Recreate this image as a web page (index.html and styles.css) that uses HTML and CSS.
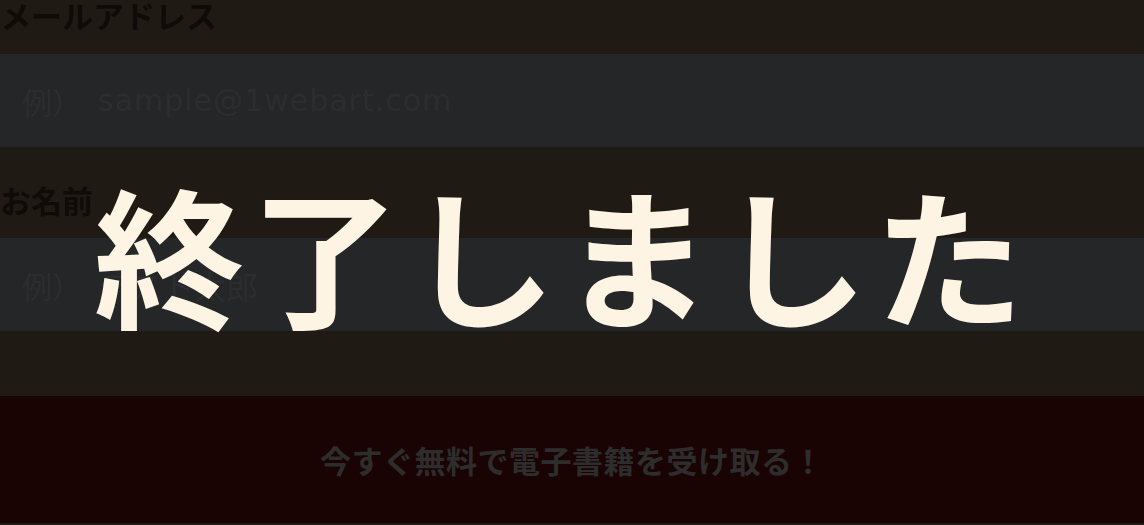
FILE: index.html
```html
<!DOCTYPE html>
<html lang="ja">
<head>
<meta charset="utf-8">
<link rel="stylesheet" href="styles.css">
</head>
<body>
<div class="page">
  <form class="form">
    <label class="label label-first">メールアドレス</label>
    <div class="input"><span class="ex">例）</span><span class="ph">sample@1webart.com</span></div>
    <label class="label label-second">お名前</label>
    <div class="input"><span class="ex">例）</span><span class="ph ph-jp">テスト太郎</span></div>
    <div class="button">今すぐ無料で電子書籍を受け取る！</div>
  </form>
  <div class="overlay">終了しました</div>
</div>
</body>
</html>
```
FILE: styles.css
```css
html, body {
  margin: 0;
  padding: 0;
  background: #201a15;
  overflow: hidden;
}
.page {
  position: relative;
  width: 1144px;
  height: 525px;
  font-family: "Noto Sans CJK JP", "Noto Sans", sans-serif;
}
.form {
  display: flex;
  flex-direction: column;
}
.label {
  font-weight: 700;
  font-size: 31px;
  color: #0e0b09;
  line-height: 30px;
  padding-left: 0;
}
.label-first {
  height: 54px;
}
.label-second {
  margin-top: 38px;
  padding-top: 0;
  height: 53px;
}
.input {
  height: 93px;
  background: #252627;
  display: flex;
  align-items: center;
  padding-left: 22px;
  font-size: 30px;
  color: #2c2d2e;
}
.ex {
  width: 76px;
  font-family: "Noto Sans CJK JP", sans-serif;
}
.ph {
  font-family: "DejaVu Sans", "Noto Sans CJK JP", sans-serif;
  font-size: 30px;
  letter-spacing: 1px;
}
.ph-jp {
  font-family: "Noto Sans CJK JP", sans-serif;
  font-size: 32px;
  letter-spacing: 0;
}
.button {
  margin-top: 65px;
  height: 127px;
  background: #1a0303;
  display: flex;
  align-items: center;
  justify-content: center;
  font-weight: 700;
  font-size: 31px;
  color: #2d2d2d;
  letter-spacing: 0.5px;
}
.overlay {
  position: absolute;
  left: 94px;
  top: 162px;
  font-family: "Noto Sans CJK JP", sans-serif;
  font-weight: 700;
  font-size: 150px;
  line-height: 180px;
  letter-spacing: 6px;
  color: #fdf4e4;
  white-space: nowrap;
}
```
